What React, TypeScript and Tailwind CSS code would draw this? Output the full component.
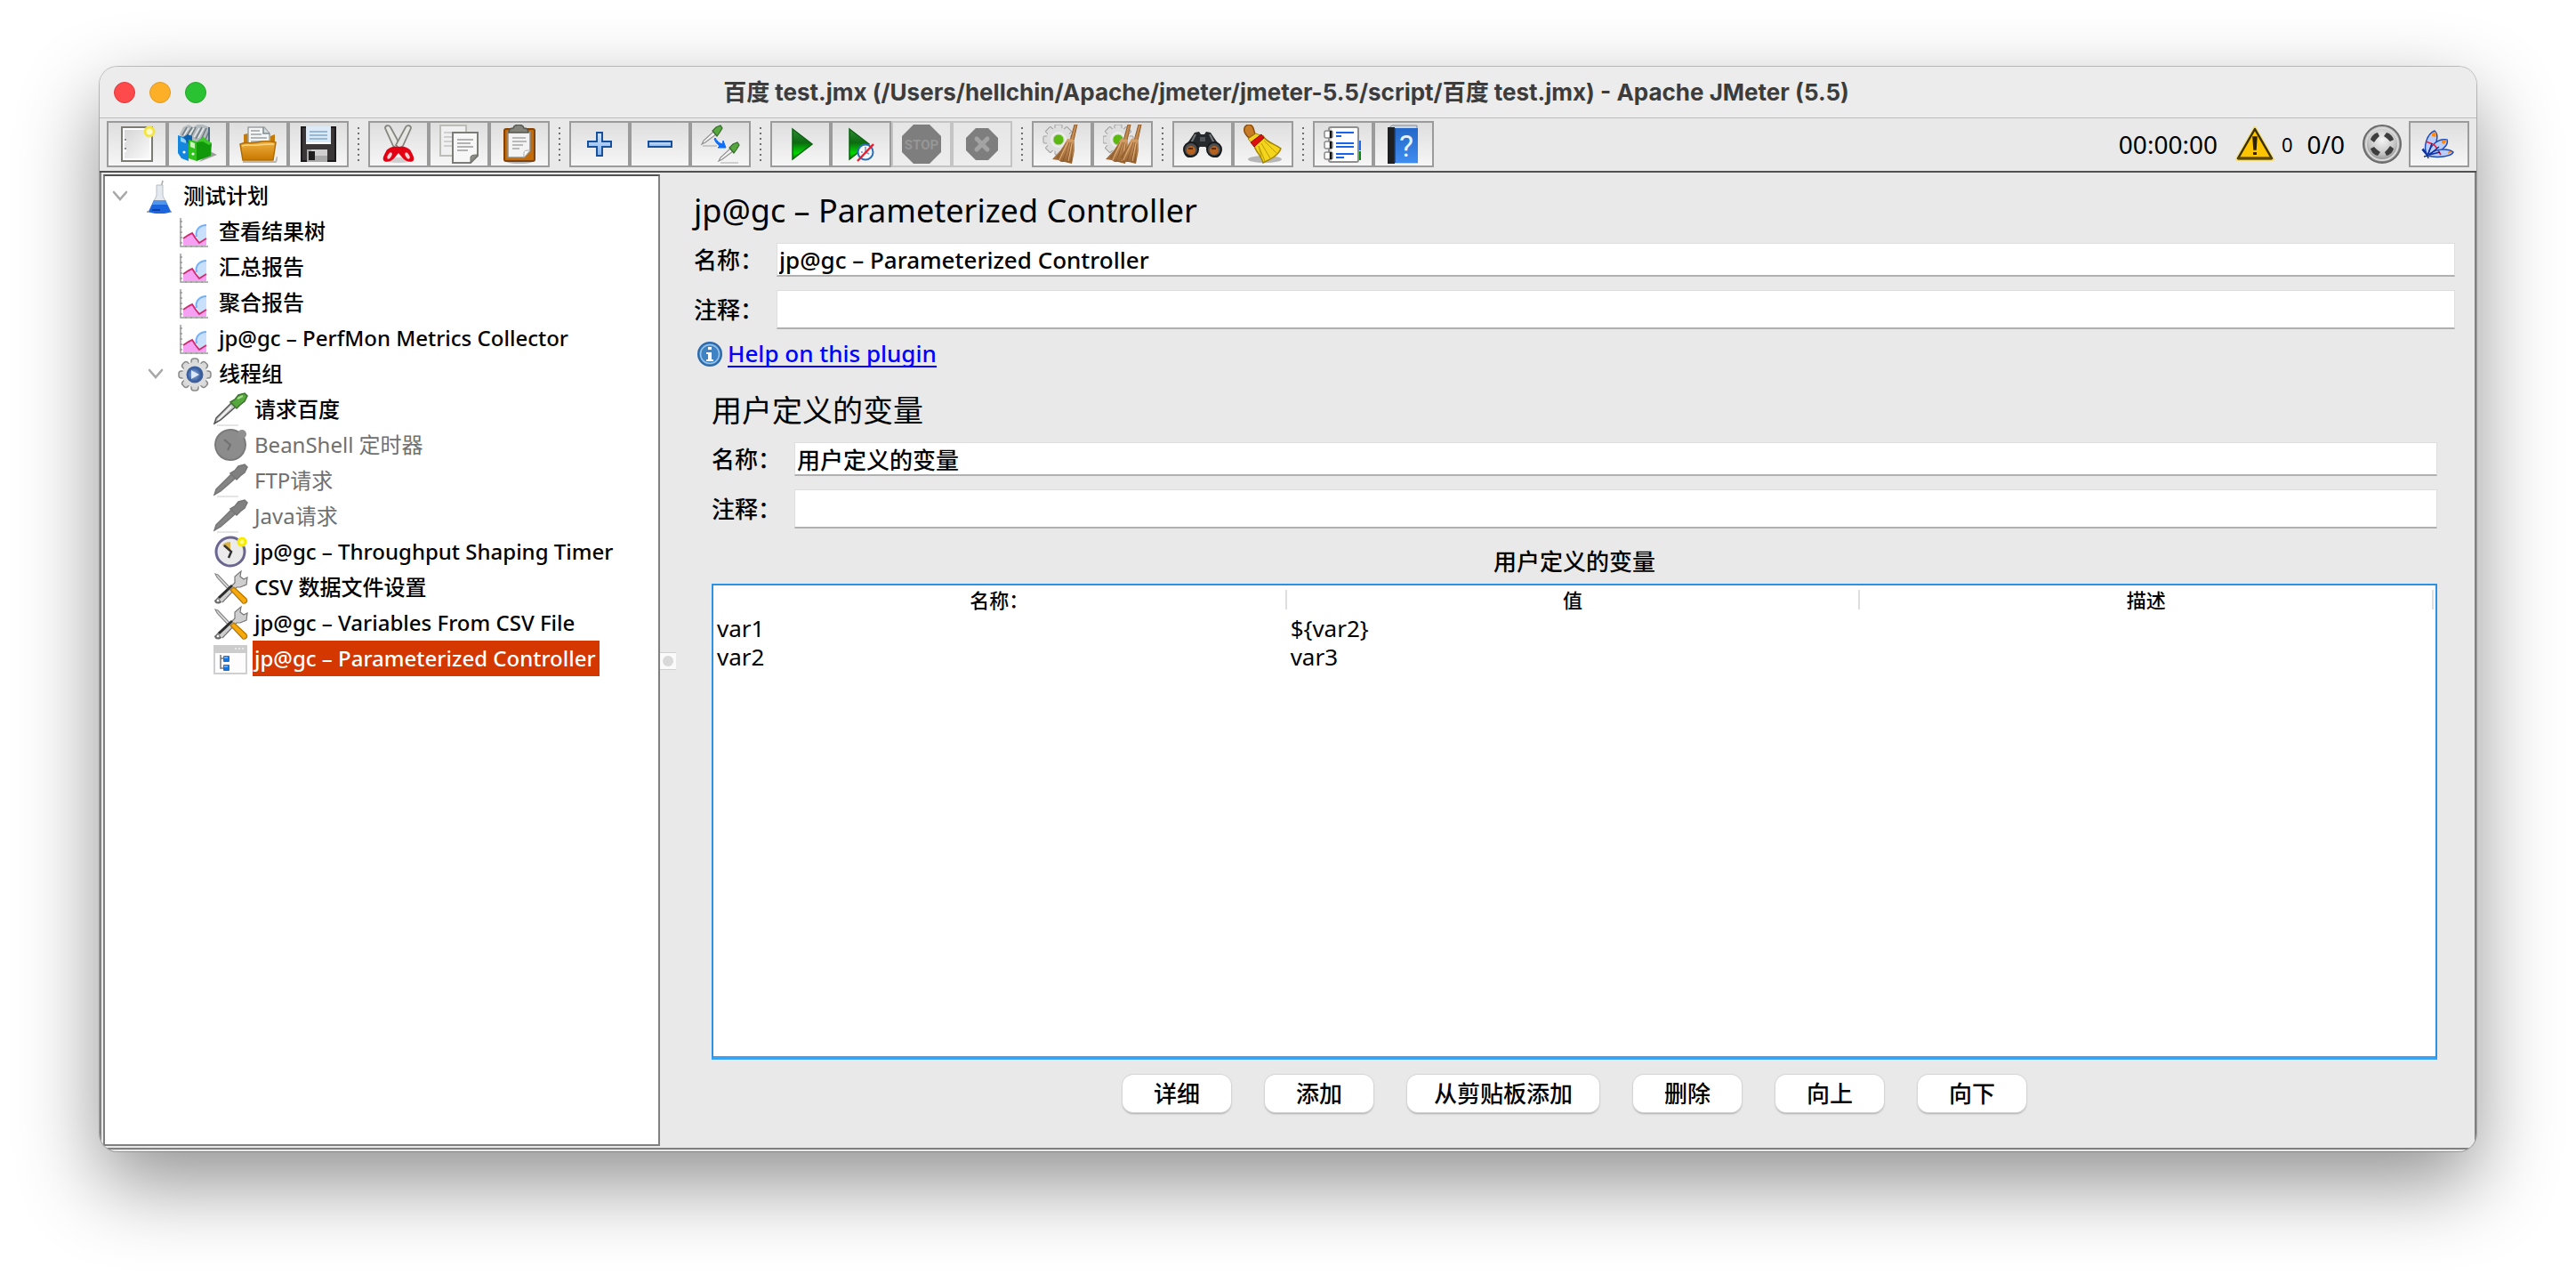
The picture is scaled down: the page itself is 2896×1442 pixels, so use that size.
import React from "react";

const LATIN_CJK = "font-['Noto_Sans','Noto_Sans_CJK_SC',sans-serif]";

/* ---------- toolbar icons ---------- */

function Svg({ children, size = 44 }: { children: React.ReactNode; size?: 40 | 44 }) {
  return (
    <svg
      viewBox={size === 44 ? "0 0 44 44" : "0 0 40 40"}
      className={size === 44 ? "block size-11 shrink-0" : "block size-10 shrink-0"}
      aria-hidden="true"
    >
      {children}
    </svg>
  );
}

function Defs() {
  return (
    <svg width="0" height="0" className="absolute" aria-hidden="true">
      <defs>
        <linearGradient id="paper" x1="0" y1="0" x2="1" y2="1">
          <stop offset="0" stopColor="#d6d6d6" />
          <stop offset="1" stopColor="#fafafa" />
        </linearGradient>
        <linearGradient id="orange" x1="0" y1="0" x2="0" y2="1">
          <stop offset="0" stopColor="#f0b040" />
          <stop offset="1" stopColor="#c87800" />
        </linearGradient>
        <linearGradient id="green" x1="0" y1="0" x2="0" y2="1">
          <stop offset="0" stopColor="#2f8a35" />
          <stop offset="0.45" stopColor="#0c6a10" />
          <stop offset="0.8" stopColor="#00d800" />
          <stop offset="1" stopColor="#0a7a0c" />
        </linearGradient>
        <linearGradient id="sky" x1="0" y1="0" x2="0" y2="1">
          <stop offset="0" stopColor="#cfe4fb" />
          <stop offset="1" stopColor="#86b3ea" />
        </linearGradient>
        <linearGradient id="broom" x1="0" y1="0" x2="0" y2="1">
          <stop offset="0" stopColor="#d6a06a" />
          <stop offset="1" stopColor="#94602e" />
        </linearGradient>
        <radialGradient id="ball" cx="0.5" cy="0.4" r="0.6">
          <stop offset="0" stopColor="#f4f4f4" />
          <stop offset="0.6" stopColor="#c4c4c4" />
          <stop offset="1" stopColor="#7a7a7a" />
        </radialGradient>
        <radialGradient id="navy" cx="0.45" cy="0.5" r="0.6">
          <stop offset="0" stopColor="#8fb2e6" />
          <stop offset="1" stopColor="#1d4284" />
        </radialGradient>
        <linearGradient id="book" x1="0" y1="0" x2="0" y2="1">
          <stop offset="0" stopColor="#2468c8" />
          <stop offset="1" stopColor="#3f8cf0" />
        </linearGradient>
      </defs>
    </svg>
  );
}

const NewIcon = () => (
  <Svg>
    <rect x="5" y="3" width="34" height="38" fill="#fff" stroke="#7b7b73" strokeWidth="2" />
    <rect x="8" y="6" width="28" height="32" fill="url(#paper)" />
    <path d="M8 16v4M8 27v4" stroke="#fff" strokeWidth="4" />
    <path d="M9 16v2M9 26v2" stroke="#8a8a8a" strokeWidth="2" />
    <circle cx="36" cy="8" r="5" fill="#fffbc8" stroke="#f3e440" strokeWidth="3" />
  </Svg>
);

const TemplatesIcon = () => (
  <Svg>
    <path d="M24 42l20-8-8-4z" fill="#000" opacity="0.35" />
    <path d="M2 11L6 3l6-3 5 3 5-3h6l8 3v16L20 20 4 14z" fill="#b4bbbf" />
    <path d="M5 12l5-9M9 14l7-11M14 15l6-12M20 16l7-13M26 17l6-13M31 17l4-10" stroke="#6c777d" strokeWidth="1.4" />
    <path d="M7 12l5-8M12 13l6-9M18 14l6-10M23 15l6-11" stroke="#eef1f2" strokeWidth="1.2" />
    <path d="M35 3v16" stroke="#4a6a80" strokeWidth="2" />
    <path d="M0 12l6 2 6 2v25l-8-3-4-6z" fill="#1486dd" />
    <path d="M3 14l6 3v4l-6-2z" fill="#8fd0f8" />
    <path d="M6 14l5-3 5 2v8l-4 1z" fill="#0b62ae" />
    <circle cx="7" cy="31" r="1.6" fill="#fff" />
    <path d="M12 17l9 2v22l-9-3z" fill="#2fc21c" />
    <path d="M14 19l5 2v6l-5-2z" fill="#c9f5b8" />
    <path d="M21 20l7-6 10 7-1 14-16 6z" fill="#12990b" />
    <path d="M21 20l7-6 10 7-3 2-7-4z" fill="#3cc829" />
    <circle cx="17" cy="33" r="1.6" fill="#fff" />
  </Svg>
);

const OpenIcon = () => (
  <Svg>
    <path d="M5 42h37l2-6" stroke="#000" strokeWidth="2" opacity="0.25" fill="none" />
    <path d="M6 22V11l5-1v12zM36 22V13l5-2v16z" fill="#c67a08" />
    <path d="M11 3h18l6 7v12H11z" fill="#f4f6f6" stroke="#9aa0a0" strokeWidth="1.5" />
    <path d="M28 3v7h7" fill="#d2dadd" stroke="#7e8a90" strokeWidth="1.5" />
    <path d="M14 7h10M14 11h12M14 15h18M14 19h18" stroke="#98a0a4" strokeWidth="1.5" />
    <path d="M2 22c8-3 10 0 19-2s17-1 21 0l-3 20H5z" fill="url(#orange)" stroke="#b06c04" strokeWidth="1.5" />
    <path d="M4 24c8-2 10 0 18-1s14-1 18-1" stroke="#ffd67e" strokeWidth="1.5" fill="none" />
  </Svg>
);

const SaveIcon = () => (
  <Svg>
    <rect x="2" y="2" width="40" height="40" rx="2" fill="#3a3638" />
    <rect x="3" y="3" width="38" height="38" fill="none" stroke="#1c1a1c" strokeWidth="2" />
    <rect x="8" y="2" width="28" height="20" fill="#dceaf8" />
    <path d="M12 8h20M12 12h20M12 16h20" stroke="#7ea6d0" strokeWidth="1.5" />
    <rect x="8" y="20" width="28" height="2" fill="#fff" />
    <rect x="9" y="28" width="23" height="14" fill="#a9a9a9" />
    <rect x="14" y="28" width="18" height="7" fill="#cfcfcf" />
    <rect x="11" y="30" width="7" height="10" fill="#1e1e1e" />
  </Svg>
);

const CutIcon = () => (
  <Svg>
    <ellipse cx="22" cy="40" rx="16" ry="3" fill="#000" opacity="0.15" />
    <path d="M7 4c0-3 4-4 6-1l11 20-4 4-4-3z" fill="#e6e6e2" stroke="#85857f" strokeWidth="1.8" />
    <path d="M36 4c0-3-4-4-6-1L19 23l4 4 4-3z" fill="#e6e6e2" stroke="#85857f" strokeWidth="1.8" />
    <path d="M22 25c-6-1-12 1-14 5s-4 7-3 10 9 2 12-2l5-6 5 6c3 4 11 5 12 2s-1-6-3-10-8-6-14-5z" fill="#e40012" />
    <ellipse cx="12" cy="35" rx="2" ry="4" transform="rotate(30 12 35)" fill="#f2d4d6" />
    <ellipse cx="32" cy="35" rx="2" ry="4" transform="rotate(-30 32 35)" fill="#f2d4d6" />
  </Svg>
);

const CopyIcon = () => (
  <Svg>
    <rect x="1" y="1" width="29" height="34" fill="#f0f0f0" stroke="#bdbdb8" strokeWidth="2" />
    <path d="M5 9h16M5 14h12M5 19h10M5 24h10" stroke="#cfcfcf" strokeWidth="2" />
    <path d="M15 9h28v26l-8 8H15z" fill="#f7f7f7" stroke="#7c7c76" strokeWidth="2" />
    <path d="M43 34l-8 9v-6c0-3 5-3 8-3z" fill="#8c8f88" stroke="#6c6c66" strokeWidth="1" />
    <path d="M20 17h18M20 21h15M20 25h18M20 29h12" stroke="#b2b2b2" strokeWidth="2" />
  </Svg>
);

const PasteIcon = () => (
  <Svg>
    <ellipse cx="22" cy="42" rx="14" ry="2" fill="#000" opacity="0.25" />
    <rect x="5" y="5" width="34" height="36" rx="2" fill="#c46a06" stroke="#834207" strokeWidth="2" />
    <path d="M9 8h25v22l-7 7H9z" fill="#f3f3f3" stroke="#8d8d87" strokeWidth="1.5" />
    <path d="M34 29l-7 8v-5c0-3 3-3 7-3z" fill="#fff" stroke="#aaa" strokeWidth="1" />
    <path d="M14 15h15M14 19h16M14 23h12M14 27h8" stroke="#a7a7a7" strokeWidth="1.6" />
    <path d="M15 4c1-5 11-5 12 0 4 0 5 2 5 5H10c0-3 1-5 5-5z" fill="#83837a" stroke="#55554f" strokeWidth="1.5" />
  </Svg>
);

const PlusIcon = () => (
  <Svg>
    <path d="M19 9h6v10h10v6H25v10h-6V25H9v-6h10z" fill="url(#sky)" stroke="#17509d" strokeWidth="2" />
  </Svg>
);

const MinusIcon = () => (
  <Svg>
    <rect x="9" y="19" width="26" height="6" fill="url(#sky)" stroke="#17509d" strokeWidth="2" />
  </Svg>
);

const ToggleIcon = () => (
  <Svg>
    <path d="M2 24h16M22 43h20" stroke="#000" strokeWidth="1" opacity="0.3" />
    <path d="M1 22l2-4L14 8l3 3L5 20z" fill="#f3f3f3" stroke="#8f8f8f" strokeWidth="1.2" />
    <path d="M13 7l5 6 3-4 3-5-2-3-5 2z" fill="#56a83e" stroke="#356b28" strokeWidth="1.2" />
    <path d="M20 41l2-4 11-10 3 3-12 9z" fill="#f3f3f3" stroke="#8f8f8f" strokeWidth="1.2" />
    <path d="M32 26l5 6 3-4 3-5-2-3-5 2z" fill="#56a83e" stroke="#356b28" strokeWidth="1.2" />
    <path d="M16 15c2 4 5 6 8 7l1-4 3 8h-9l2-2c-3-2-5-5-6-8z" fill="#0d6dfd" stroke="#0d6dfd" strokeWidth="1" />
  </Svg>
);

const PlayIcon = () => (
  <Svg>
    <path d="M13 5l22 17-22 17z" fill="url(#green)" stroke="#0b6012" strokeWidth="1.5" />
  </Svg>
);

const PlayNoPauseIcon = () => (
  <Svg>
    <path d="M9 5l22 17L9 39z" fill="url(#green)" stroke="#0b6012" strokeWidth="1.5" />
    <circle cx="27" cy="31" r="8.5" fill="#f3f6fa" stroke="#2c70b4" strokeWidth="2" />
    <path d="M27 25v6l4 2M22 31h2" stroke="#7793b5" strokeWidth="1.5" fill="none" />
    <path d="M18 41L36 22" stroke="#e81c2c" strokeWidth="2.4" />
  </Svg>
);

const StopIcon = () => (
  <Svg>
    <path d="M13 0h18l13 13v18L31 44H13L0 31V13z" fill="#7e7e7e" />
    <text x="22" y="28" textAnchor="middle" fontSize="15" fontWeight="700" fill="#969696" fontFamily="Roboto, sans-serif">
      STOP
    </text>
  </Svg>
);

const ShutdownIcon = () => (
  <Svg>
    <path d="M15 4h14l11 11v14L29 40H15L4 29V15z" fill="#7e7e7e" />
    <path d="M16 16l12 12M28 16L16 28" stroke="#a3a3a3" strokeWidth="5" strokeLinecap="round" />
  </Svg>
);

function Cog({ cx, cy }: { cx: number; cy: number }) {
  return (
    <g transform={`translate(${cx} ${cy})`}>
      {[0, 45, 90, 135].map((a) => (
        <rect key={a} x="-4" y="-17" width="8" height="34" rx="1" transform={`rotate(${a})`} fill="#dedede" stroke="#9d9d9d" strokeWidth="1" />
      ))}
      <circle r="13.5" fill="#dedede" />
      <circle r="9" fill="#ececec" />
      <circle r="6" fill="#5cb812" stroke="#c4cfb8" strokeWidth="1" />
    </g>
  );
}

function Broom({ dx }: { dx: number }) {
  return (
    <g transform={`translate(${dx} 0)`}>
      <path d="M36 0h3l-4 18h-4z" fill="#c58a4d" stroke="#8d5b2c" strokeWidth="1" />
      <path d="M28 16l8 1v12l-3 15-8-2h-4l-3-2-7-1 10-11z" fill="url(#broom)" />
      <path d="M27 20l-10 18M30 20l-7 21M32 20l-4 22M34 21l-2 21M24 25l-8 12" stroke="#7c4c20" strokeWidth="1" opacity="0.6" />
      <path d="M28 20l-9 20M33 21l-4 20" stroke="#e0b078" strokeWidth="1" />
    </g>
  );
}

const ClearIcon = () => (
  <Svg>
    <Cog cx={18} cy={17} />
    <Broom dx={0} />
  </Svg>
);

const ClearAllIcon = () => (
  <Svg>
    <Cog cx={17} cy={17} />
    <Broom dx={-8} />
    <Broom dx={4} />
  </Svg>
);

const SearchIcon = () => (
  <Svg>
    <path d="M13 9l5-1 2 3h4l2-3 5 1 4 6 7 10c3 5 0 12-5 12-6 0-9-4-9-9l-3-3h-6l-3 3c0 5-3 9-9 9-5 0-8-7-5-12l7-10z" fill="#26292c" />
    <path d="M14 11l-5 10M30 11l5 10" stroke="#72777c" strokeWidth="2" />
    <rect x="19" y="14" width="6" height="5" fill="#50555a" />
    <circle cx="9" cy="28" r="8" fill="#4b4f53" stroke="#17181a" strokeWidth="2" />
    <circle cx="35" cy="28" r="8" fill="#4b4f53" stroke="#17181a" strokeWidth="2" />
    <circle cx="9" cy="29" r="5" fill="#b4601f" />
    <circle cx="35" cy="29" r="5" fill="#b4601f" />
    <path d="M6 27h5M32 27h5" stroke="#5e2a08" strokeWidth="2" />
  </Svg>
);

const ResetIcon = () => (
  <Svg>
    <ellipse cx="24" cy="39" rx="19" ry="4" fill="#000" opacity="0.25" />
    <path d="M2 2c4-4 8-1 9 2l2 7-7 4C2 11-1 6 2 2z" fill="#c87c28" stroke="#8a4d0c" strokeWidth="1.5" />
    <path d="M5 16l9-6 7 3-9 11z" fill="#f2d020" stroke="#a58a06" strokeWidth="1" />
    <path d="M12 24l10-11c5 8 14 9 20 14-3 8-12 12-20 16-2-8-8-12-10-19z" fill="#f4d51c" stroke="#a18407" strokeWidth="1.5" />
    <path d="M17 24l7 17M20 21l10 17M23 18l14 14M17 24l3 12" stroke="#b79a0c" strokeWidth="1" />
    <path d="M8 20l12-9 3 4-11 10z" fill="#dd1010" stroke="#9a0606" strokeWidth="1" />
  </Svg>
);

const FunctionIcon = () => (
  <Svg>
    <rect x="37" y="18" width="5" height="11" fill="#1c6df2" />
    <rect x="37" y="30" width="5" height="10" fill="#0b8a12" />
    <rect x="6" y="3" width="33" height="39" rx="2" fill="#fff" stroke="#8f8f8f" strokeWidth="2" />
    <path d="M8 4v37" stroke="#d7d7d7" strokeWidth="2" />
    {[11, 23, 35].map((y) => (
      <g key={y}>
        <rect x="1" y={y - 4} width="9" height="8" rx="2" fill="#fff" stroke="#8a8a8a" strokeWidth="1.5" />
        <path d={`M8 ${y - 4}v8`} stroke="#111" strokeWidth="2.5" />
      </g>
    ))}
    <path d="M14 9h20M14 13h6M14 21h20M14 25h20M14 33h20M14 37h9" stroke="#1763ec" strokeWidth="2" />
  </Svg>
);

const HelpIcon = () => (
  <Svg>
    <path d="M8 44h30" stroke="#000" strokeWidth="1" opacity="0.3" />
    <path d="M5 4l4-3h28v4H6z" fill="#cfd6dc" stroke="#7e8a94" strokeWidth="1" />
    <rect x="4" y="3" width="8" height="41" fill="#1d1f21" />
    <rect x="12" y="4" width="26" height="39" fill="url(#book)" />
    <path d="M12 4v39" stroke="#113f86" strokeWidth="1.5" />
    <text x="25" y="36" textAnchor="middle" fontSize="34" fill="#e9f2fc" fontFamily="Roboto, sans-serif">
      ?
    </text>
  </Svg>
);

const WarningIcon = () => (
  <Svg>
    <path d="M22 4l20 35H2z" fill="#ffc400" stroke="#f3de7c" strokeWidth="4" strokeLinejoin="round" />
    <path d="M22 5l19 33H3z" fill="#ffc400" stroke="#3d3000" strokeWidth="2.5" strokeLinejoin="round" />
    <path d="M3 38h38" stroke="#5c4700" strokeWidth="3" />
    <path d="M20 14h4l-1 14h-2z" fill="#2d2300" stroke="#2d2300" strokeWidth="1.5" />
    <rect x="20" y="31" width="4" height="3" fill="#2d2300" />
  </Svg>
);

const BallIcon = () => (
  <Svg>
    <circle cx="22" cy="22" r="21" fill="url(#ball)" stroke="#6b6b6b" strokeWidth="2" />
    <circle cx="22" cy="22" r="18" fill="none" stroke="#d9d9d9" strokeWidth="2" />
    {[0, 90, 180, 270].map((a) => (
      <path key={a} d="M9 17c1-4 4-7 8-8l2 4-3 3-3 4z" fill="#3d3d3d" transform={`rotate(${a} 22 22)`} />
    ))}
  </Svg>
);

const FeatherIcon = () => (
  <Svg>
    <g fill="#b9cdf8" stroke="#1a49b8" strokeWidth="1.5">
      <path d="M9 35C3 25 9 10 17 7c6 5 2 19-8 28z" />
      <path d="M9 35c3-12 12-20 22-18 3 6-9 16-22 18z" />
      <path d="M9 35c8-8 23-9 29-4-2 5-18 7-29 4z" />
    </g>
    <path d="M14 10l4-2c1 1 1 4 0 6l-4-1zM25 18l6-1-3 5-3-1zM33 29l4 2-5 2z" fill="#ff8a14" />
    <path d="M7 19l8 3M16 22l4 5M21 29l3 5" stroke="#e31f3c" strokeWidth="1.8" />
    <path d="M4 27l5 8M3 28l6 7M9 35l1 3M9 35l-4 1M10 33l4-12M11 34l11-9M11 34l12-3" stroke="#0c2f9e" strokeWidth="1.5" />
  </Svg>
);

/* ---------- tree icons ---------- */

const FlaskIcon = () => (
  <Svg size={40}>
    <path d="M5 38h28" stroke="#555" strokeWidth="2" opacity="0.5" />
    <path d="M23 3l-3 12" stroke="#aaa" strokeWidth="1.5" />
    <path d="M16 8h7v12l9 18H7l9-18z" fill="#e3e9ee" stroke="#b5bec6" strokeWidth="1" />
    <path d="M13 25h13l6 13c-6 3-18 3-25 0z" fill="#1b66dd" />
    <path d="M13 25h13l2 5H11z" fill="#5296ea" />
    <path d="M11 36h9" stroke="#0a3fa8" strokeWidth="2" />
  </Svg>
);

const ChartIcon = () => (
  <Svg size={40}>
    <path d="M32 13c-8 0-13 6-11 13l3 6 8-4z" fill="#c9e0fc" />
    <path d="M32 13c-8 0-13 6-11 13" stroke="#74b0fa" strokeWidth="2" fill="none" />
    <path d="M6 29l6-5 4-1 4 6 4 4 8-4v7H6z" fill="#f6a0f4" />
    <path d="M6 28l6-4 4-2 4 6 4 5 8-5" stroke="#cf2c70" strokeWidth="2" fill="none" />
    <path d="M3 5v32h31" stroke="#9a9a9a" strokeWidth="1.5" fill="none" />
    <path d="M2 9h3M2 15h3M2 21h3M2 27h3M2 33h3M9 38v-2M15 38v-2M21 38v-2M27 38v-2" stroke="#9a9a9a" strokeWidth="1.5" />
  </Svg>
);

const GearIcon = () => (
  <Svg size={40}>
    <g transform="translate(19 21)">
      {[0, 45, 90, 135].map((a) => (
        <rect key={a} x="-4" y="-18" width="8" height="36" rx="3" transform={`rotate(${a})`} fill="#d8d8d8" stroke="#8a8a8a" strokeWidth="1.5" />
      ))}
      <circle r="14" fill="#dcdcdc" />
      <circle r="8.5" fill="url(#navy)" stroke="#3d5f9c" strokeWidth="2" />
      <path d="M-4-5l9 5-9 5z" fill="#dfe8f6" />
    </g>
  </Svg>
);

function Dropper({ off }: { off?: boolean }) {
  return (
    <Svg size={40}>
      <path d="M4 38h24" stroke="#000" strokeWidth="1" opacity="0.2" />
      <path d="M1 36l2-6L20 13l5 4L8 32z" fill={off ? "#858585" : "#c8c8c8"} stroke={off ? "#787878" : "#555"} strokeWidth="1.5" />
      {!off && <path d="M5 32l15-15" stroke="#fff" strokeWidth="1.5" />}
      <path d="M19 12l7 7 4-4 5-4 3-6-3-3-7 2-4 5z" fill={off ? "#808080" : "#57a83c"} stroke={off ? "#757575" : "#39722a"} strokeWidth="1.5" />
      {!off && <path d="M27 8l6-3" stroke="#a8dc92" strokeWidth="2" />}
    </Svg>
  );
}

const ClockOffIcon = () => (
  <Svg size={40}>
    <circle cx="19" cy="20" r="17" fill="#8c8c8c" stroke="#7a7a7a" strokeWidth="2" />
    <circle cx="32" cy="8" r="5" fill="#8f8f8f" />
    <path d="M12 14l7 6-3 6" stroke="#6f6f6f" strokeWidth="2" fill="none" />
  </Svg>
);

const ClockIcon = () => (
  <Svg size={40}>
    <circle cx="19" cy="20" r="16" fill="#ebebeb" stroke="#6a668f" strokeWidth="3" />
    <path d="M19 20l-9-7c2-3 5-4 9-4z" fill="#d9b24a" />
    <path d="M12 13l8 7-3 7" stroke="#333" strokeWidth="2.5" fill="none" />
    <circle cx="32" cy="9" r="4" fill="#fffb80" stroke="#f7ec00" strokeWidth="3" />
  </Svg>
);

const ToolsIcon = () => (
  <Svg size={40}>
    <path d="M2 5l3 1 15 16-2 2L4 9z" fill="#ddd" stroke="#888" strokeWidth="1.2" />
    <path d="M1 35l17-16 5 4L9 37c-4 3-8 1-8-2z" fill="#6a6a6a" />
    <path d="M4 33l16-14 4-4v-7l7-6-1 6 4 3 4-2-1 8-7 3h-4L10 37" fill="#cfcfcf" stroke="#777" strokeWidth="1.2" />
    <path d="M6 32l15-14" stroke="#2e2e2e" strokeWidth="3" />
    <circle cx="5" cy="35" r="2" fill="#fff" stroke="#666" strokeWidth="1" />
    <path d="M19 23l4-3 14 13c2 3-1 6-4 5z" fill="#f5a90a" stroke="#b77604" strokeWidth="1.2" />
  </Svg>
);

const ControllerIcon = () => (
  <Svg size={40}>
    <rect x="1" y="6" width="36" height="31" fill="#fdfdfd" stroke="#cfcfcf" strokeWidth="2" />
    <rect x="0" y="5" width="38" height="9" fill="#cccccc" />
    <path d="M24 9h10" stroke="#e8e8e8" strokeWidth="2" strokeDasharray="2 2" />
    <path d="M8 16v15h5M8 20h5" stroke="#777" strokeWidth="1.5" fill="none" />
    <rect x="11" y="17" width="7" height="7" rx="1" fill="#1673dd" />
    <rect x="11" y="27" width="7" height="7" rx="1" fill="#1673dd" />
    <path d="M12 19h4M12 29h4" stroke="#85bdf5" strokeWidth="1.5" />
  </Svg>
);

const InfoIcon = () => (
  <svg viewBox="0 0 28 28" className="block size-7 shrink-0" aria-hidden="true">
    <circle cx="14" cy="14" r="13" fill="#3f83c4" stroke="#2c69ab" strokeWidth="2" />
    <circle cx="14" cy="14" r="10.5" fill="none" stroke="#9cc4e6" strokeWidth="1.5" />
    <rect x="12" y="6" width="4" height="3" fill="#fff" />
    <path d="M10 12h6v8h2v2h-8v-2h2v-6h-2z" fill="#fff" />
  </svg>
);

/* ---------- window parts ---------- */

type Tool = { label: string; icon: React.ReactNode; disabled?: boolean };

const toolGroups: Tool[][] = [
  [
    { label: "新建", icon: <NewIcon /> },
    { label: "模板", icon: <TemplatesIcon /> },
    { label: "打开", icon: <OpenIcon /> },
    { label: "保存", icon: <SaveIcon /> },
  ],
  [
    { label: "剪切", icon: <CutIcon /> },
    { label: "复制", icon: <CopyIcon /> },
    { label: "粘贴", icon: <PasteIcon /> },
  ],
  [
    { label: "展开全部", icon: <PlusIcon /> },
    { label: "折叠全部", icon: <MinusIcon /> },
    { label: "切换", icon: <ToggleIcon /> },
  ],
  [
    { label: "启动", icon: <PlayIcon /> },
    { label: "不停顿启动", icon: <PlayNoPauseIcon /> },
    { label: "停止", icon: <StopIcon />, disabled: true },
    { label: "关闭", icon: <ShutdownIcon />, disabled: true },
  ],
  [
    { label: "清除", icon: <ClearIcon /> },
    { label: "清除全部", icon: <ClearAllIcon /> },
  ],
  [
    { label: "搜索", icon: <SearchIcon /> },
    { label: "重置搜索", icon: <ResetIcon /> },
  ],
  [
    { label: "函数助手", icon: <FunctionIcon /> },
    { label: "帮助", icon: <HelpIcon /> },
  ],
];

function ToolButton({ label, icon, disabled }: Tool) {
  return (
    <button
      type="button"
      aria-label={label}
      disabled={disabled}
      className="flex h-[52px] w-[68px] items-center justify-center border-2 border-[#9b9b9b] bg-linear-to-b from-[#dedede] to-[#f6f6f6] disabled:border-[#c4c4c4] disabled:from-[#e6e6e6] disabled:to-[#ededed]"
    >
      {icon}
    </button>
  );
}

function ToolSeparator() {
  return (
    <div className="mx-2.5 flex flex-col gap-1" aria-hidden="true">
      {[0, 1, 2, 3, 4, 5, 6].map((i) => (
        <span key={i} className="block size-0.5 bg-[#6e6e6e]" />
      ))}
    </div>
  );
}

function Toolbar() {
  return (
    <div className="flex h-[61px] items-center border-b-2 border-[#515151] bg-[#e9e9e9] px-2 pt-[3px] pb-1" role="toolbar">
      {toolGroups.map((group, i) => (
        <React.Fragment key={i}>
          {i > 0 && <ToolSeparator />}
          <div className="flex">
            {group.map((t) => (
              <ToolButton key={t.label} {...t} />
            ))}
          </div>
        </React.Fragment>
      ))}
      <div className="ml-auto flex items-center text-[28px] leading-8 text-black">
        <span className="mr-5">00:00:00</span>
        <WarningIcon />
        <span className="mr-4 ml-2 text-[22px]">0</span>
        <span className="mr-5">0/0</span>
        <BallIcon />
        <span className="ml-2">
          <ToolButton label="Apache" icon={<FeatherIcon />} />
        </span>
      </div>
    </div>
  );
}

type Node = {
  level: 0 | 1 | 2;
  label: string;
  icon: React.ReactNode;
  open?: boolean;
  off?: boolean;
  selected?: boolean;
};

const nodes: Node[] = [
  { level: 0, label: "测试计划", icon: <FlaskIcon />, open: true },
  { level: 1, label: "查看结果树", icon: <ChartIcon /> },
  { level: 1, label: "汇总报告", icon: <ChartIcon /> },
  { level: 1, label: "聚合报告", icon: <ChartIcon /> },
  { level: 1, label: "jp@gc – PerfMon Metrics Collector", icon: <ChartIcon /> },
  { level: 1, label: "线程组", icon: <GearIcon />, open: true },
  { level: 2, label: "请求百度", icon: <Dropper /> },
  { level: 2, label: "BeanShell 定时器", icon: <ClockOffIcon />, off: true },
  { level: 2, label: "FTP请求", icon: <Dropper off />, off: true },
  { level: 2, label: "Java请求", icon: <Dropper off />, off: true },
  { level: 2, label: "jp@gc – Throughput Shaping Timer", icon: <ClockIcon /> },
  { level: 2, label: "CSV 数据文件设置", icon: <ToolsIcon /> },
  { level: 2, label: "jp@gc – Variables From CSV File", icon: <ToolsIcon /> },
  { level: 2, label: "jp@gc – Parameterized Controller", icon: <ControllerIcon />, selected: true },
];

const indent = ["pl-0", "pl-10", "pl-20"];

function Tree() {
  return (
    <ul
      role="tree"
      className="m-0.5 mr-0 w-[626px] shrink-0 border-2 border-[#808080] border-t-[#515151] bg-white pt-0.5 text-[24px] leading-10"
    >
      {nodes.map((n) => (
        <li key={n.label} role="treeitem" aria-selected={!!n.selected} className={`flex h-10 items-center ${indent[n.level]}`}>
          <span className="flex w-[42px] shrink-0 pl-2">
            {n.open && (
              <svg viewBox="0 0 18 12" className="h-3 w-[18px]" aria-hidden="true">
                <path d="M2 2l7 8 7-8" fill="none" stroke="#a8a8a8" strokeWidth="2.6" strokeLinecap="round" />
              </svg>
            )}
          </span>
          {n.icon}
          <span
            className={
              n.selected
                ? "ml-1 bg-[#d43700] pr-1 pl-0.5 font-medium text-white"
                : n.off
                  ? "ml-1 pr-1 pl-0.5 text-[#707070]"
                  : "ml-1 pr-1 pl-0.5 font-medium text-black"
            }
          >
            {n.label}
          </span>
        </li>
      ))}
    </ul>
  );
}

function Field({ id, label, value, tall }: { id: string; label: string; value: string; tall?: boolean }) {
  return (
    <div className="flex items-center">
      <label htmlFor={id} className="w-[93px] shrink-0 leading-8">
        {label}
      </label>
      <input
        id={id}
        type="text"
        defaultValue={value}
        className={`min-w-0 flex-1 border border-b-2 border-[#dedede] border-b-[#b0b0b0] bg-white px-0.5 leading-8 outline-none ${tall ? "h-11" : "h-[38px]"}`}
      />
    </div>
  );
}

const rows = [
  ["var1", "${var2}", ""],
  ["var2", "var3", ""],
];

const actions = ["详细", "添加", "从剪贴板添加", "删除", "向上", "向下"];

function Editor() {
  return (
    <main className="flex min-w-0 flex-1 flex-col pt-[19px] pr-[22px] pb-10 pl-5 text-[26px] font-medium text-black">
      <h1 className="text-[36px] leading-[48px] font-normal">jp@gc – Parameterized Controller</h1>
      <div className="mt-3 flex flex-col gap-[15px]">
        <Field id="controller-name" label="名称：" value="jp@gc – Parameterized Controller" />
        <Field id="controller-comment" label="注释：" value="" tall />
      </div>
      <div className="mt-3.5 flex h-7 items-center gap-1.5 pl-1">
        <InfoIcon />
        <a href="#help" className="border-b-2 border-[#0000ff] leading-7 text-[#0000ff]">
          Help on this plugin
        </a>
      </div>

      <section className="mt-[25px] flex flex-1 flex-col px-5">
        <h2 className="text-[34px] leading-[48px] font-normal">用户定义的变量</h2>
        <div className="mt-3 flex flex-col gap-[15px]">
          <Field id="vars-name" label="名称：" value="用户定义的变量" />
          <Field id="vars-comment" label="注释：" value="" tall />
        </div>
        <h3 className="mt-[21px] text-center leading-8">用户定义的变量</h3>
        <div className="mt-[9px] flex-1 border-2 border-b-4 border-[#2b92e4] border-b-[#38a3f5] bg-white pr-0.5">
          <table className="w-full table-fixed border-collapse text-left">
            <thead>
              <tr className="h-8 text-[22px]">
                {["名称：", "值", "描述"].map((h) => (
                  <th key={h} className="p-0 font-medium">
                    <span className="block border-r-2 border-[#dedede] text-center leading-[22px]">{h}</span>
                  </th>
                ))}
              </tr>
            </thead>
            <tbody>
              {rows.map((r) => (
                <tr key={r[0]} className="h-8">
                  {r.map((c, i) => (
                    <td key={i} className="px-1 py-0 leading-8 font-normal">
                      {c}
                    </td>
                  ))}
                </tr>
              ))}
            </tbody>
          </table>
        </div>
        <div className="mt-[17px] flex justify-center gap-[38px]">
          {actions.map((a) => (
            <button
              key={a}
              type="button"
              className="h-[42px] min-w-[122px] rounded-xl bg-white px-[30px] leading-8 shadow-[0_0_1px_1px_#d6d6d6,0_2px_2px_#a8a8a8]"
            >
              {a}
            </button>
          ))}
        </div>
      </section>
    </main>
  );
}

export default function App() {
  return (
    <div className={`flex min-h-screen bg-white px-28 pt-[75px] pb-[148px] ${LATIN_CJK}`}>
      <Defs />
      <div className="flex min-w-0 flex-1 flex-col overflow-hidden rounded-[20px] bg-[#e9e9e9] shadow-[0_0_0_1px_rgba(0,0,0,0.22),0_36px_90px_rgba(0,0,0,0.43)]">
        <header className="relative flex h-[58px] items-center border-b border-[#bdbdbd] bg-[#ececec] px-4">
          <div className="absolute left-4 flex gap-4">
            <button type="button" aria-label="关闭窗口" className="size-6 rounded-full border border-[#e0383b] bg-[#ff4a4b]" />
            <button type="button" aria-label="最小化" className="size-6 rounded-full border border-[#e09a22] bg-[#fdb027]" />
            <button type="button" aria-label="缩放" className="size-6 rounded-full border border-[#22a72b] bg-[#2ac233]" />
          </div>
          <div className="flex-1 pr-1 text-center font-['Inter','Noto_Sans_CJK_SC',sans-serif] text-[26px] leading-8 font-bold text-[#3c3c3c]">
            <span className="mr-1.5">百度</span>test.jmx (/Users/hellchin/Apache/jmeter/jmeter-5.5/script/
            <span className="mr-1.5">百度</span>test.jmx) - Apache JMeter (5.5)
          </div>
        </header>
        <Toolbar />
        <div className="flex flex-1 border-x-2 border-[#808080]">
          <div className="mb-0.5 flex min-w-0 flex-1 border-b-2 border-[#808080]">
            <Tree />
            <div className="relative w-[18px] shrink-0">
              <div className="absolute top-[539px] left-0 flex h-5 w-[18px] items-center justify-center border-y border-[#d0d0d0] bg-[#fafafa]">
                <span className="size-3 rounded-full bg-[#d9d9d9]" />
              </div>
            </div>
            <Editor />
          </div>
        </div>
      </div>
    </div>
  );
}
